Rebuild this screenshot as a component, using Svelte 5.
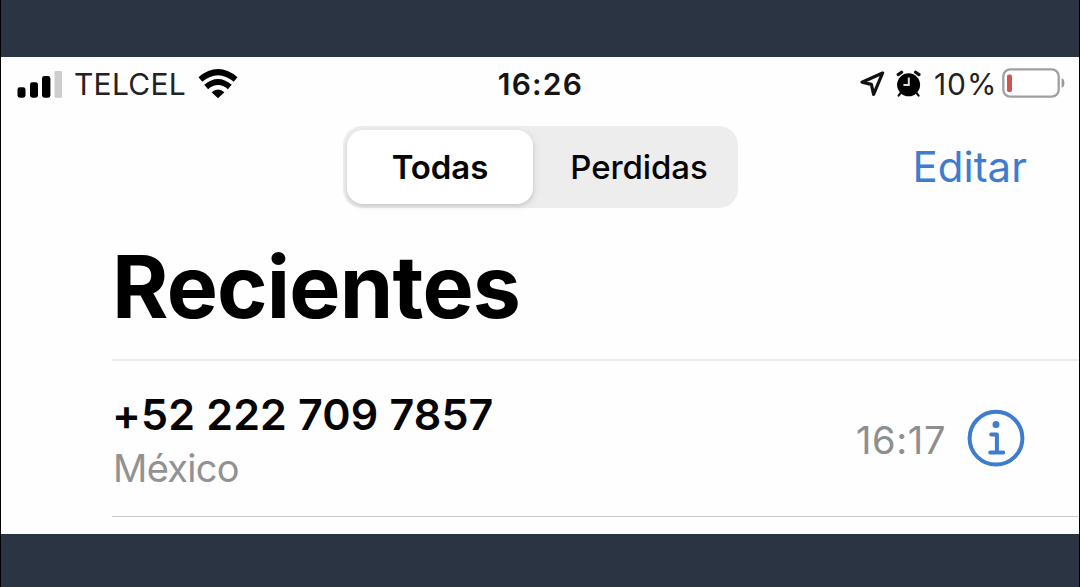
<script>
  const tabs = ['Todas', 'Perdidas'];
  let selected = $state('Todas');
  const calls = [{ number: '+52 222 709 7857', place: 'México', time: '16:17' }];
</script>

<div class="screen">
  <main class="phone">
    <header class="status">
      <div class="carrier">
        <svg class="signal" width="46" height="28" viewBox="0 0 46 28">
          <rect x="1.5" y="16.2" width="8" height="10.5" rx="2.4" />
          <rect x="14" y="11.2" width="8" height="15.5" rx="2.4" />
          <rect x="26" y="5" width="8.4" height="21.7" rx="2.4" />
          <rect class="dim" x="38.5" y="0" width="7.5" height="26.7" rx="1" />
        </svg>
        <span class="operator">TELCEL</span>
        <svg class="wifi" width="40" height="30" viewBox="0 0 40 30">
          <path class="arc" d="M2.4 10.4Q20 -4.2 37.6 10.4" />
          <path class="arc" d="M8.2 17.9Q20 8 31.8 17.9" />
          <path d="M20 29.2L13.6 23.2Q20 18 26.4 23.2Z" />
        </svg>
      </div>
      <span class="clock">16:26</span>
      <div class="power">
        <svg class="location" width="26" height="26" viewBox="0 0 26 26">
          <path d="M22.6 2L2 11.2L11.4 13.4L13.6 23.4Z" />
        </svg>
        <svg class="alarm" width="26" height="28" viewBox="0 0 26 28">
          <circle cx="12.6" cy="14.8" r="11.5" />
          <path class="bell" d="M2.2 4.6L5.6 2.2M23 4.6L19.6 2.2" />
          <path class="leg" d="M4.6 23L2.6 25.6M20.6 23L22.6 25.6" />
          <path class="hands" d="M12.8 7.6V15H7.4" />
        </svg>
        <span class="percent">10%</span>
        <svg class="battery" width="64" height="32" viewBox="0 0 64 32">
          <rect class="shell" x="1.3" y="2.3" width="55.4" height="27.4" rx="7" />
          <rect class="charge" x="5" y="7.5" width="5" height="17.5" rx="1.8" />
          <path class="cap" d="M59.6 11.2Q62.4 12 62.4 16T59.6 20.8Z" />
        </svg>
      </div>
    </header>

    <nav class="toolbar">
      <div class="segments">
        {#each tabs as tab}
          <button class="segment" class:active={selected === tab} onclick={() => (selected = tab)}>
            <span>{tab}</span>
          </button>
        {/each}
      </div>
      <button class="edit">Editar</button>
    </nav>

    <section class="recents">
      <h1>Recientes</h1>
      {#each calls as call}
        <article class="call">
          <div class="who">
            <strong>{call.number}</strong>
            <span class="place">{call.place}</span>
          </div>
          <time>{call.time}</time>
          <svg class="info" width="58" height="58" viewBox="0 0 58 58">
            <circle class="ring" cx="29" cy="29.2" r="26.4" />
            <circle cx="29" cy="15.5" r="3.5" />
            <path class="stem" d="M24.2 25.5H29.9V43.5M23.2 43.5H36.2" />
          </svg>
        </article>
      {/each}
    </section>
  </main>
</div>

<style>
  :global(body) {
    background: #2b3442;
  }
  .screen {
    box-sizing: border-box;
    width: 1080px;
    height: 587px;
    padding: 57px 0 53px;
    border: solid #000;
    border-width: 0 1px;
    background: #2b3442;
    font-family: Inter, "Liberation Sans", sans-serif;
    overflow: hidden;
  }
  .phone {
    height: 477px;
    background: #fefefe;
    color: #050505;
    white-space: nowrap;
  }
  button {
    margin: 0;
    padding: 0;
    border: 0;
    background: none;
    font: inherit;
    color: inherit;
  }
  svg {
    display: block;
    flex: none;
  }
  .status {
    display: grid;
    grid-template-columns: 1fr auto 1fr;
    align-items: center;
    height: 55px;
    padding: 0 13px 0 15px;
    font-size: 30px;
    line-height: 40px;
  }
  .carrier,
  .power {
    display: flex;
    align-items: center;
  }
  .power {
    justify-content: flex-end;
  }
  .dim {
    fill: #cdcdcd;
  }
  .operator {
    margin: -2px 0 0 12px;
    width: 113px;
    letter-spacing: 0.25px;
    color: #222;
  }
  .wifi {
    margin-left: 11px;
    margin-top: -2px;
  }
  .arc {
    fill: none;
    stroke: #000;
    stroke-width: 5.9;
  }
  .clock {
    margin: -2px 1px 0 0;
    font-weight: 600;
    letter-spacing: 1.2px;
    color: #151515;
  }
  .location {
    margin-top: -1px;
  }
  .location path {
    fill: none;
    stroke: #111;
    stroke-width: 3.2;
    stroke-linejoin: round;
  }
  .alarm {
    margin-left: 10px;
    margin-top: -2px;
  }
  .bell,
  .leg {
    fill: none;
    stroke: #111;
    stroke-linecap: round;
  }
  .bell {
    stroke-width: 3.2;
  }
  .leg {
    stroke-width: 2.2;
  }
  .hands {
    fill: none;
    stroke: #ddd;
    stroke-width: 2;
  }
  .percent {
    margin: -2px 0 0 12px;
    width: 62px;
    letter-spacing: 0.9px;
    color: #222;
  }
  .battery {
    margin-left: 6px;
    margin-top: -3px;
  }
  .shell {
    fill: #fff;
    stroke: #a0a0a0;
    stroke-width: 2.3;
  }
  .charge {
    fill: #d1544d;
  }
  .cap {
    fill: #999;
  }
  .toolbar {
    display: flex;
    align-items: center;
    justify-content: space-between;
    height: 110px;
    padding: 0 52px 0 342px;
  }
  .segments {
    display: flex;
    box-sizing: border-box;
    width: 395px;
    height: 82px;
    padding: 4px;
    border-radius: 19px;
    background: #ededed;
    font-size: 33px;
  }
  .segment {
    box-sizing: border-box;
    display: flex;
    align-items: center;
    justify-content: center;
    width: 201px;
    padding-left: 11px;
    border-radius: 16px;
    font-weight: 500;
    letter-spacing: -0.1px;
  }
  .segment.active {
    width: 186px;
    padding-left: 0;
    background: #fff;
    box-shadow: 0 2px 4px rgba(0, 0, 0, 0.12), 2px 2px 10px rgba(0, 0, 0, 0.06);
    font-weight: 600;
  }
  .edit {
    font-size: 42px;
    line-height: 50px;
    color: #3d7cce;
  }
  .recents {
    padding-left: 111px;
  }
  h1 {
    margin: 0;
    padding: 10px 0 17px;
    border-bottom: 2px solid #ececec;
    font-size: 86px;
    font-weight: 700;
    letter-spacing: -0.8px;
    line-height: 110px;
    color: #000;
  }
  .call {
    display: flex;
    align-items: center;
    height: 155px;
    padding-right: 54px;
    border-bottom: 1px solid #c9c9c9;
  }
  .who {
    display: flex;
    flex: 1;
    flex-direction: column;
    padding-top: 5px;
  }
  strong {
    font-size: 43px;
    font-weight: 600;
    letter-spacing: 0.15px;
    line-height: 54px;
  }
  .place {
    padding-left: 1px;
    font-size: 38px;
    letter-spacing: -0.7px;
    line-height: 54px;
    color: #929292;
  }
  time {
    margin-top: 2px;
    font-size: 38px;
    letter-spacing: 0.6px;
    line-height: 50px;
    color: #8e8e8e;
  }
  .info {
    margin: -1px 0 0 21px;
    fill: #3d7cce;
  }
  .ring,
  .stem {
    fill: none;
    stroke: #3d7cce;
    stroke-width: 4;
    stroke-linecap: round;
    stroke-linejoin: round;
  }
</style>
